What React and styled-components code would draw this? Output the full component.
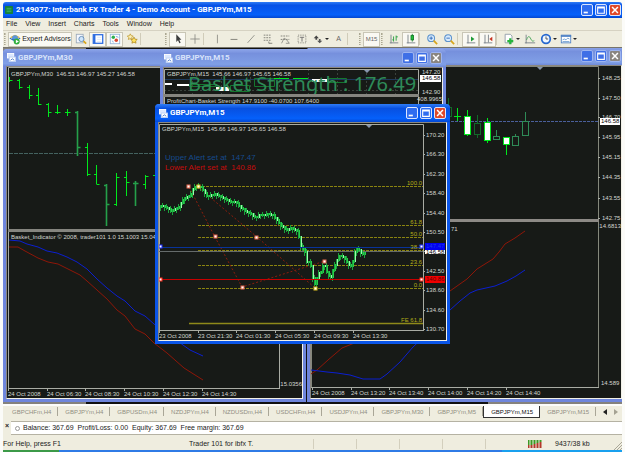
import React from "react";
import styled, { createGlobalStyle } from "styled-components";

const CHART_BG = "#171a17";
const AXIS = "#a9aca4";
const LIME = "#00e81c";
const SEA = "#2e8b57";

const TOOLS_MAIN = [
  ["Market Watch", "search"],
  ["Data Window", "data"],
  ["Navigator", "navigator"],
  ["Favorites", "stars"],
];

const TOOLS_LINES = [
  ["Vertical line", "vline"],
  ["Horizontal line", "hline"],
  ["Trendline", "trend"],
  ["Equidistant channel", "channel"],
  ["Fibonacci", "fibo"],
  ["Text label", "label"],
];

const TABS = [
  "GBPCHFm,H4",
  "GBPJPYm,H4",
  "GBPUSDm,H4",
  "NZDJPYm,H4",
  "NZDUSDm,H4",
  "USDCHFm,H4",
  "USDJPYm,H4",
  "GBPJPYm,M30",
  "GBPJPYm,M5",
  "GBPJPYm,M15",
  "GBPJPYm,M15",
];

// x, high, low, open, close
const M30_BARS = [
  [9, 77, 82, null, 80],
  [19, 79, 89, 80, 87],
  [29, 85, 99, 87, 95],
  [38, 88, 105, 95, 104],
  [48, 103, 117, 104, 112],
  [57, 105, 114, 112, 112],
  [67, 109, 116, 112, 112],
  [77, 111, 156, 112, 147, true],
  [87, 143, 176, 147, 174],
  [96, 165, 184, 174, 184],
  [106, 184, 226, 185, 204, true],
  [116, 173, 206, 204, 177],
  [126, 171, 196, 177, 182],
  [135, 181, 206, 183, 183, true],
  [145, 175, 189, 184, 176],
  [155, 174, 178, 175, 175],
];

// x, body top, body bottom, high, low, kind
const M15_CANDLES = [
  [448, 107, 116, 98, 116, "dark"],
  [457, 116, 117, 108, 121, "cross"],
  [467, 116, 134, 110, 136, "full"],
  [477, 123, 134, 115, 138, "dark"],
  [487, 122, 140, 118, 143, "full"],
  [496, 136, 139, 130, 139, "hollow"],
  [506, 137, 144, 137, 155, "full"],
  [515, 136, 145, 134, 145, "hollow"],
  [525, 121, 135, 112, 135, "hollow"],
];

const PRICE_PATH = [
  [159, 207], [163, 205], [167, 207], [171, 210], [173, 211], [177, 208],
  [180, 207], [182, 203], [185, 199], [187, 197], [191, 196], [193, 191],
  [195, 187], [198, 186], [202, 187], [204, 190], [206, 193], [209, 197],
  [212, 195], [216, 194], [220, 196], [224, 198], [228, 200], [233, 202],
  [237, 202], [240, 206], [244, 209], [248, 212], [252, 214], [257, 218],
  [260, 215], [265, 215], [270, 214], [274, 215], [278, 220], [281, 225],
  [284, 227], [288, 230], [292, 228], [295, 230], [299, 231], [301, 243],
  [303, 248], [307, 253], [308, 262], [311, 262], [313, 270], [315, 285],
  [317, 283], [319, 273], [322, 272], [325, 263], [327, 268], [329, 275],
  [332, 277], [333, 272], [335, 268], [339, 257], [341, 255], [345, 257],
  [347, 260], [350, 265], [353, 267], [355, 255], [357, 248], [360, 250],
  [363, 255], [368, 252],
];

const FIBO = [
  [186, "100.0"],
  [225, "61.8"],
  [237, "50.0"],
  [250, "38.2"],
  [265, "23.6"],
  [288, "0.0"],
];

function priceAt(x) {
  const i = Math.max(1, PRICE_PATH.findIndex((p) => p[0] >= x));
  const [x0, y0] = PRICE_PATH[i - 1];
  const [x1, y1] = PRICE_PATH[i];
  return y0 + ((y1 - y0) * (x - x0)) / (x1 - x0);
}

function Label({ x, y, children, ...rest }) {
  return (
    <text x={x} y={y + 2} {...rest}>
      {children}
    </text>
  );
}

function TimeAxis({ y, from, to, start, labels }) {
  return (
    <>
      <path d={`M${from} ${y + 0.5}H${to}`} stroke={AXIS} />
      {labels.map((label, i) => {
        const x = Math.round(start + i * 38.7);
        return (
          <React.Fragment key={label}>
            <path d={`M${x + 0.5} ${y}v3`} stroke={AXIS} />
            <Label x={x} y={y + 6}>
              {label}
            </Label>
          </React.Fragment>
        );
      })}
    </>
  );
}

function M30Chart() {
  return (
    <Plot viewBox="7 67 295 331" width="295" height="331">
      <path d="M8.5 388V67.5H279.5V388" fill="none" stroke={AXIS} />
      <path d="M9 153.5H279" stroke="#44625f" strokeDasharray="4 1" />
      {M30_BARS.map(([x, high, low, open, close, muted]) => (
        <path
          key={x}
          d={`M${x + 0.5} ${high}V${low}M${x + 0.5} ${close + 0.5}h3${
            open ? `M${x - 2} ${open + 0.5}h3` : ""
          }`}
          stroke={muted ? "#25a04a" : LIME}
          strokeWidth={muted ? 1.6 : 1}
        />
      ))}
      <Label x={11} y={74}>GBPJPYm,M30&nbsp; 146.53 146.97 145.27 146.58</Label>
      <rect x="8" y="229" width="272" height="3" fill="#85857f" />
      <Label x={11} y={237}>Basket_Indicator © 2008, trader101 1.0 15.1003 15.0499</Label>
      <polyline
        points="9,240 20,241 27,244 38,247 47,251 57,253 67,257 77,262 87,269 97,279 107,288 117,296 125,301 135,311 145,316 154,324 183,345 190,350 203,356"
        fill="none"
        stroke="#0b1fd0"
      />
      <polyline
        points="9,247 18,247 25,251 38,258 48,262 58,264 70,270 80,275 87,281 97,290 107,299 117,310 125,316 135,329 145,334 154,343 167,353 184,368 203,380"
        fill="none"
        stroke="#8e1608"
      />
      <Label x={302} y={384} textAnchor="end">15.0356</Label>
      <TimeAxis
        y={388}
        from={8}
        to={280}
        start={8}
        labels={["24 Oct 2008", "24 Oct 06:30", "24 Oct 08:30", "24 Oct 10:30", "24 Oct 12:30", "24 Oct 14:30"]}
      />
    </Plot>
  );
}

function Candle({ x, top, bottom, high, low, kind }) {
  const color = { dark: "#126a2a", cross: LIME, full: LIME, hollow: SEA }[kind];
  return (
    <g stroke={color} fill={kind === "full" ? "#fff" : CHART_BG}>
      <path d={`M${x + 0.5} ${high}V${low}`} />
      {kind === "cross" ? (
        <path d={`M${x - 3} ${top + 0.5}h7`} />
      ) : (
        <rect x={x - 2.5} y={top + 0.5} width="6" height={bottom - top} />
      )}
    </g>
  );
}

function M15Chart() {
  const prices = [
    [78, "148.25"], [98, "147.50"], [117, "146.70"], [137, "145.95"], [157, "145.15"],
    [177, "144.35"], [198, "143.55"], [218, "142.75"],
  ];
  return (
    <Plot viewBox="311 66 310 332" width="310" height="332">
      <path d="M311.5 387V66.5H598.5V387" fill="none" stroke="#85887c" />
      <path d="M311 121.5H598" stroke="#4a5f9a" strokeDasharray="3 1" />
      <path d="M537 67h6l-3 3z" fill="#8795ad" />
      {M15_CANDLES.map(([x, top, bottom, high, low, kind]) => (
        <Candle key={x} {...{ x, top, bottom, high, low, kind }} />
      ))}
      {prices.map(([y, text]) => (
        <g key={text}>
          <path d={`M598 ${y + 0.5}h2`} stroke={AXIS} />
          <Label x={602} y={y}>{text}</Label>
        </g>
      ))}
      <rect x="600" y="118" width="20" height="7" fill="#fff" />
      <Label x={601} y={121} fill="#000">146.58</Label>
      <rect x="311" y="219" width="288" height="3" fill="#8d8a86" />
      <Label x={451} y={229}>71</Label>
      <Label x={621} y={226} textAnchor="end">14.6813</Label>
      <Label x={601} y={383}>14.589</Label>
      <polyline
        points="311,374 317,370 328,360 342,348 352,344 390,328 425,306 450,291 467,279 477,269 493,259 499,252 505,244 515,238 525,231"
        fill="none"
        stroke="#8e1608"
      />
      <polyline
        points="311,370 327,372 337,373 350,375 363,379 380,379 387,374 400,362 413,347 430,331 450,310 460,301 470,293 477,290 495,286 507,281 516,276 525,270"
        fill="none"
        stroke="#0b1fd0"
      />
      <TimeAxis
        y={387}
        from={311}
        to={599}
        start={312}
        labels={["24 Oct 2008", "24 Oct 13:20", "24 Oct 13:40", "24 Oct 14:00", "24 Oct 14:20", "24 Oct 14:40"]}
      />
    </Plot>
  );
}

function BasketChart() {
  return (
    <Plot viewBox="164 68 278 90" width="278" height="90">
      <path d="M192.5 69v26M221.5 69v26M250.5 69v26M279.5 69v26M308.5 69v26M337.5 69v26M366.5 69v26M395.5 69v26M164 90.5h254" stroke="#3a423c" strokeDasharray="2 2" />
      <path d="M164 79.5h254" stroke="#1f3a5c" />
      <g fill="#fff">
        <path d="M164 83h8v2h-8zM177 84h12v2h-12zM216 87h13v4h-13zM312 79h15v3h-15z" />
      </g>
      <g fill="none" stroke="#15772f">
        <path d="M189.500 84.500h27v2h-27zM230.500 85.500h19v6h-19zM254.500 78.500h20v8h-20zM327.500 78.500h19v4h-19z" />
      </g>
      <path d="M274 78.500h15M293 78.500h15" stroke={LIME} />
      <BigText x="188" y="91">Basket Strength : 176.49</BigText>
      <path d="M164.500 158V69.500H418.500V158" fill="none" stroke={AXIS} />
      <path d="M364 70h6l-3 3z" fill="#8795ad" />
      <Label x={167} y={74}>GBPJPYm,M15&nbsp; 145.66 146.97 145.65 146.58</Label>
      <Label x={422} y={72}>147.20</Label>
      <rect x="420" y="75" width="21" height="7" fill="#fff" />
      <Label x={422} y={78} fill="#000">146.58</Label>
      <Label x={422} y={92}>142.90</Label>
      <rect x="164" y="94" width="255" height="3" fill="#85857f" />
      <Label x={442} y={99} textAnchor="end">408.9965</Label>
      <Label x={167} y={101}>ProfitChart-Basket Strength 147.9100 -40.0700 107.6400</Label>
    </Plot>
  );
}

function Handle({ x, y, color = "#e86a50" }) {
  return <rect x={x - 1} y={y - 1} width="3" height="3" fill="#fff" stroke={color} strokeWidth="1" />;
}

function FiboChart() {
  const prices = ["170.20", "166.30", "162.30", "158.40", "154.40", "150.50", "146.50", "142.50", "138.60", "134.60", "130.70"];
  const candles = [];
  for (let x = 160; x < 366; x += 2) {
    const y = Math.round(priceAt(x));
    const next = Math.round(priceAt(x + 2));
    const top = Math.min(y, next) - 1;
    const bottom = Math.max(y, next) + 1;
    const wick = (x * 7) % 4;
    candles.push(
      <React.Fragment key={x}>
        <path d={`M${x + 0.5} ${top - wick}V${bottom + 3 - wick}`} stroke="#1aa33c" />
        <path d={`M${x + 1.5} ${top}V${bottom}`} stroke={x % 3 ? "#27cf4a" : "#9dfaae"} />
      </React.Fragment>
    );
  }
  return (
    <Plot viewBox="159 123 287 217" width="287" height="217">
      <path d="M159.500 331V124.500H423.500V331" fill="none" stroke={AXIS} />
      <path d="M366 125h6l-3 3z" fill="#8795ad" />
      <Label x={162} y={129}>GBPJPYm,M15&nbsp; 145.66 146.97 145.65 146.58</Label>
      <AlertText x="165" y="160" fill="#164a8c">Upper Alert set at&nbsp; 147.47</AlertText>
      <AlertText x="165" y="170" fill="#c40c0c">Lower Alert set at&nbsp; 140.86</AlertText>
      <g stroke="#8a8410" strokeDasharray="3 1">
        {FIBO.map(([y]) => (
          <path key={y} d={`M198 ${y + 0.5}H423`} />
        ))}
      </g>
      <path d="M189 323.500H423" stroke="#8f8a1a" strokeWidth="1.500" />
      <path d="M189 187L215 237 242 287 325 261M198 187L257 237 315 288" fill="none" stroke="#8c1d0c" strokeDasharray="2 2" />
      <path d="M159 251.500H423" stroke="#656b6b" />
      {candles}
      <path d="M159 247.500H423" stroke="#08339a" />
      <path d="M159 279.500H423" stroke="#c80000" />
      {FIBO.map(([y, text]) => (
        <Label key={y} x={422} y={y - 3} textAnchor="end" fill="#b3ab18">{text}</Label>
      ))}
      <Label x={422} y={320} textAnchor="end" fill="#b3ab18">FE 61.8</Label>
      {prices.map((text, i) => {
        const y = Math.round(135 + i * 19.4);
        return (
          <g key={text}>
            <path d={`M423 ${y + 0.5}h2`} stroke={AXIS} />
            {text !== "146.50" && <Label x={426} y={y}>{text}</Label>}
          </g>
        );
      })}
      <rect x="425" y="249" width="20" height="5" fill="#fff" />
      <Label x={426} y={252} fill="#000">146.58</Label>
      <rect x="425" y="243" width="20" height="7" fill="#0000f0" />
      <Label x={426} y={246} fill="#1c3ce8">147.47</Label>
      <rect x="425" y="276" width="20" height="7" fill="#f00000" />
      <Label x={426} y={279} fill="#5c0000">140.86</Label>
      <Handle x={188} y={186} />
      <Handle x={198} y={186} color="#e0c020" />
      <Handle x={215} y={236} />
      <Handle x={256} y={237} />
      <Handle x={242} y={287} />
      <Handle x={315} y={288} color="#e0c020" />
      <Handle x={324} y={261} />
      <Handle x={160} y={246} color="#2030ff" />
      <Handle x={421} y={246} color="#2030ff" />
      <Handle x={160} y={279} color="#ff3020" />
      <Handle x={421} y={279} color="#ff3020" />
      <TimeAxis
        y={330}
        from={159}
        to={424}
        start={159}
        labels={["23 Oct 2008", "23 Oct 21:30", "24 Oct 01:30", "24 Oct 05:30", "24 Oct 09:30", "24 Oct 13:30"]}
      />
    </Plot>
  );
}

const ICONS = {
  expert: (
    <>
      <path d="M1 5l6-3 6 3-6 2z" fill="#d9b13a" />
      <circle cx="7" cy="6" r="3.500" fill="#5b96dc" />
      <path d="M1 6c3 3 9 3 12 0" fill="none" stroke="#2d6cb4" strokeWidth="1.500" />
      <circle cx="9" cy="10" r="3.500" fill="#2fae3c" />
      <path d="M8 8l3.500 2L8 12z" fill="#fff" />
    </>
  ),
  search: (
    <>
      <rect x="1.500" y="1.500" width="8" height="10" fill="#f4f8ff" stroke="#9aa9b8" />
      <circle cx="7.500" cy="7" r="3" fill="#cfe6fa" stroke="#5d88b4" />
      <path d="M10 9.500l3 3" stroke="#d8a51a" strokeWidth="2" />
    </>
  ),
  data: (
    <>
      <rect x="1.500" y="2" width="11" height="10" fill="#fff" stroke="#2c6be0" strokeWidth="1.500" />
      <path d="M3 2v10" stroke="#2c6be0" strokeWidth="2" />
      <path d="M6 5h5M6 7.500h5M6 10h5" stroke="#dce6f8" />
    </>
  ),
  navigator: (
    <>
      <rect x="1.500" y="1.500" width="11" height="11" fill="#fdfdfd" stroke="#93b4d8" />
      <circle cx="5" cy="5" r="2" fill="#2fae4c" />
      <circle cx="8.500" cy="8.500" r="2" fill="#d9442c" />
      <path d="M8 4l3 1M4 9l1 2" stroke="#6aa0e0" />
    </>
  ),
  stars: (
    <>
      <path d="M5 1l1.100 2.200 2.400.300-1.700 1.700.4 2.400L5 6.500 2.800 7.600l.4-2.400L1.500 3.500l2.400-.300z" fill="#fdf0b0" stroke="#b88f22" strokeWidth="0.800" />
      <path d="M9.300 4.800l1.200 2.400 2.600.3-1.900 1.800.5 2.600-2.400-1.200-2.400 1.200.5-2.600-1.900-1.800 2.600-.3z" fill="#ffe25c" stroke="#a87f14" strokeWidth="0.800" />
    </>
  ),
  cursor: <path d="M5 1.500v9l2-2 1.600 3.500 1.500-.7L8.500 8H11z" fill="#3c3c3c" />,
  cross: <path d="M7 1.500v11M1.500 7h11" stroke="#8b8b84" />,
  vline: <path d="M7.500 2v10" stroke="#8b8b84" />,
  hline: <path d="M3 7.500h8" stroke="#77776f" />,
  trend: <path d="M3 11.500l8-9" stroke="#8b8b84" />,
  channel: (
    <>
      <path d="M2 2.500h9M2 5.500h9M2 8.500h9" stroke="#77776f" strokeDasharray="2 1" />
      <path d="M8 12h4M8 10v2" stroke="#77776f" />
    </>
  ),
  fibo: (
    <>
      <path d="M2 3.500h10M2 7.500h10" stroke="#77776f" strokeDasharray="2 1" />
      <path d="M3 12l3-6 3 2 3 4M8 12h4" fill="none" stroke="#8b8b84" />
    </>
  ),
  label: (
    <>
      <rect x="2.500" y="2.500" width="9" height="9" fill="none" stroke="#77776f" strokeDasharray="1 1" />
      <path d="M4.500 5h5M7 5v5" stroke="#666" />
    </>
  ),
  arrows: (
    <>
      <path d="M2 6l3-3 3 3H6v2H4V6z" fill="#444" />
      <path d="M6 9l3 3 3-3h-2V7H8v2z" fill="#555" />
    </>
  ),
  bars: (
    <>
      <path d="M3.500 2v10M2 11.500h10" stroke="#747c84" />
      <path d="M6.500 4v6M5 8h1.500M9.500 3v6M9.500 4.500h2" stroke="#1d9a35" />
    </>
  ),
  candle: (
    <>
      <path d="M3.500 2v10M2 11.500h10" stroke="#747c84" />
      <path d="M8.500 1v9" stroke="#137c28" />
      <rect x="7" y="3" width="3" height="5" fill="#22c03c" stroke="#137c28" />
    </>
  ),
  zoomIn: (
    <>
      <circle cx="6" cy="6" r="4" fill="#d8eafc" stroke="#5d93cc" strokeWidth="1.200" />
      <path d="M4 6h4M6 4v4" stroke="#2563b8" />
      <path d="M9 9l4 4" stroke="#d8a51a" strokeWidth="2" />
    </>
  ),
  zoomOut: (
    <>
      <circle cx="6" cy="6" r="4" fill="#d8eafc" stroke="#5d93cc" strokeWidth="1.200" />
      <path d="M4 6h4" stroke="#2563b8" />
      <path d="M9 9l4 4" stroke="#d8a51a" strokeWidth="2" />
    </>
  ),
  scroll: (
    <>
      <path d="M3.500 2v10M2 11.500h10" stroke="#747c84" />
      <path d="M7 4l4 3-4 3z" fill="#1d9a35" />
    </>
  ),
  shift: (
    <>
      <path d="M3.500 2v10M2 11.500h10M7.500 2v9" stroke="#747c84" />
      <path d="M12 4.500v5L8.500 7z" fill="#c8321e" />
    </>
  ),
  newChart: (
    <>
      <path d="M2.500 1.500h6l2 2v8h-8z" fill="#fff" stroke="#8c98a4" />
      <path d="M8.500 6v7M5 9.500h7" stroke="#27b53c" strokeWidth="2.600" />
    </>
  ),
  indicator: (
    <>
      <path d="M2.500 2v10M1 11.500h12" stroke="#747c84" />
      <path d="M3 8c2-5 3-5 5-1s3 2 4 2" fill="none" stroke="#3fa052" />
    </>
  ),
  clock: (
    <>
      <circle cx="7" cy="7" r="5" fill="#eef6ff" stroke="#2466cf" strokeWidth="2" />
      <path d="M7 4v3h2.500" fill="none" stroke="#444" />
    </>
  ),
  template: (
    <>
      <rect x="1.500" y="2.500" width="11" height="9" fill="#fff" stroke="#4d80c4" />
      <path d="M1 3.500h12" stroke="#4d80c4" strokeWidth="2" />
      <path d="M3 8l2-1 2 1 2-2 2 1M3 10h8" fill="none" stroke="#6b9ccf" />
    </>
  ),
};

function Icon({ name }) {
  return (
    <ToolIcon viewBox="0 0 14 14" width="12" height="12" aria-hidden="true">
      {ICONS[name]}
    </ToolIcon>
  );
}

function Tool({ label, icon, pressed, menu }) {
  return (
    <ToolButton aria-label={label} aria-pressed={pressed} $pressed={pressed} $menu={menu}>
      <Icon name={icon} />
      {menu && <Caret />}
    </ToolButton>
  );
}

function WindowButtons({ active }) {
  return (
    <>
      <CaptionButton aria-label="Minimize" $active={active}>
        <svg viewBox="0 0 12 12" width="10" height="10"><path d="M2 9h5" stroke="#fff" strokeWidth="2" /></svg>
      </CaptionButton>
      <CaptionButton aria-label="Maximize" $active={active}>
        <svg viewBox="0 0 12 12" width="10" height="10"><path d="M2 2.500h8v7.500h-8zM2 3.500h8" fill="none" stroke="#fff" strokeWidth="1.300" /></svg>
      </CaptionButton>
      <CaptionButton aria-label="Close" $active={active} $close>
        <svg viewBox="0 0 12 12" width="10" height="10"><path d="M2.500 2.500l7 7M9.500 2.500l-7 7" stroke="#fff" strokeWidth="1.800" /></svg>
      </CaptionButton>
    </>
  );
}

function ChartWindow({ title, x, y, width, height, active, buttons = true, slim, children }) {
  return (
    <Frame $x={x} $y={y} $width={width} $height={height} $active={active}>
      <Caption $active={active} $slim={slim}>
        <svg viewBox="0 0 10 10" width="9" height="9" aria-hidden="true">
          <rect x="0.500" y="0.500" width="7" height="5" fill="#dce8ff" stroke="#fff" />
          <rect x="2.500" y="4.500" width="7" height="5" fill="#fff" stroke="#bcd0f4" />
          <path d="M4 8l2-1.500L8 8" fill="none" stroke="#4a78c8" />
        </svg>
        <CaptionText>{title}</CaptionText>
        {buttons && <WindowButtons active={active} />}
      </Caption>
      <WindowBody>{children}</WindowBody>
    </Frame>
  );
}

export default function App() {
  return (
    <>
      <GlobalStyle />
      <Terminal>
        <AppTitle>
          <svg viewBox="0 0 10 10" width="8" height="8" aria-hidden="true">
            <rect width="10" height="10" rx="1" fill="#17823b" />
            <path d="M2 3h6M2 5h6M2 7h6" stroke="#3fb765" />
          </svg>
          <AppTitleText>2149077: Interbank FX Trader 4 - Demo Account - GBPJPYm,M15</AppTitleText>
          <WindowButtons active />
        </AppTitle>

        <MenuBar>
          {["File", "View", "Insert", "Charts", "Tools", "Window", "Help"].map((item) => (
            <MenuItem key={item}>{item}</MenuItem>
          ))}
        </MenuBar>

        <ToolBar>
          <Grip />
          <ExpertButton aria-pressed="true">
            <Icon name="expert" />
            Expert Advisors
          </ExpertButton>
          {TOOLS_MAIN.map(([label, icon]) => (
            <Tool key={icon} label={label} icon={icon} pressed={icon === "data" || icon === "navigator"} />
          ))}
          <Separator $room={24} />
          <Grip />
          <Tool label="Cursor" icon="cursor" pressed />
          <Tool label="Crosshair" icon="cross" />
          <Separator $room={5} />
          {TOOLS_LINES.map(([label, icon]) => (
            <Tool key={icon} label={label} icon={icon} />
          ))}
          <Tool label="Arrows" icon="arrows" menu />
          <ToolButton>A</ToolButton>
          <Separator $room={11} />
          <Grip />
          <PeriodButton aria-pressed="true">M15</PeriodButton>
          <Grip />
          <Tool label="Bar chart" icon="bars" />
          <Tool label="Candlesticks" icon="candle" pressed />
          <Separator $room={4} />
          <Tool label="Zoom in" icon="zoomIn" />
          <Tool label="Zoom out" icon="zoomOut" />
          <Separator $room={5} />
          <Tool label="Auto scroll" icon="scroll" pressed />
          <Tool label="Chart shift" icon="shift" pressed />
          <Separator $room={5} />
          <Tool label="New chart" icon="newChart" menu />
          <Tool label="Indicators" icon="indicator" />
          <Tool label="Periods" icon="clock" menu />
          <Tool label="Templates" icon="template" menu />
        </ToolBar>

        <Desktop>
          <ChartWindow title="GBPJPYm,M30" x={0} y={1} width={303} height={353} buttons={false} slim>
            <M30Chart />
          </ChartWindow>
          <ChartWindow title="GBPJPYm,M15" x={304} y={-1} width={318} height={355}>
            <M15Chart />
          </ChartWindow>
          <ChartWindow title="GBPJPYm,M15" x={157} y={1} width={286} height={120}>
            <BasketChart />
          </ChartWindow>
          <ChartWindow title="GBPJPYm,M15" x={152} y={56} width={295} height={240} active>
            <FiboChart />
          </ChartWindow>
        </Desktop>

        <TabBar>
          {TABS.map((tab, i) => (
            <Tab key={i} $active={i === 9}>{tab}</Tab>
          ))}
          <TabArrows>
            <button aria-label="Scroll tabs left">
              <svg viewBox="0 0 4 6" width="4" height="6"><path d="M4 0v6L0 3z" fill="#222" /></svg>
            </button>
            <button aria-label="Scroll tabs right" disabled>
              <svg viewBox="0 0 4 6" width="4" height="6"><path d="M0 0v6l4-3z" fill="#a5a293" /></svg>
            </button>
          </TabArrows>
        </TabBar>

        <AccountRow>
          <CloseStrip aria-label="Close terminal">×</CloseStrip>
          <Account>
            <Dot />
            Balance: 367.69&nbsp; Profit/Loss: 0.00&nbsp; Equity: 367.69&nbsp; Free margin: 367.69
          </Account>
        </AccountRow>

        <StatusBar>
          <StatusHelp>For Help, press F1</StatusHelp>
          <StatusProfile>Trader 101 for ibfx T.</StatusProfile>
          <StatusCell />
          <StatusCell />
          <StatusCell />
          <StatusCell />
          <StatusCell />
          <Traffic>
            <svg viewBox="0 0 14 8" width="14" height="8" aria-hidden="true">
              <path d="M0.500 0v5M3.500 0v5M6.500 0v4M9.500 0v3M12.500 0v2" stroke="#3b9a24" strokeWidth="2" />
              <path d="M0.500 5v3M3.500 5v3M6.500 4v4M9.500 3v5M12.500 2v6" stroke="#b3382a" strokeWidth="2" />
            </svg>
            9437/38 kb
          </Traffic>
          <SizeGrip viewBox="0 0 8 8" width="8" height="8" aria-hidden="true">
            <path d="M0 8l8-8M3 8l5-5M6 8l2-2" stroke="#a9a697" />
          </SizeGrip>
        </StatusBar>
        <TaskBar />
      </Terminal>
    </>
  );
}

const GlobalStyle = createGlobalStyle`
  * {
    box-sizing: border-box;
  }
  body {
    margin: 0;
    background: #fbfbf8;
    color: #222;
    font: 7px/10px "Liberation Sans", Arial, sans-serif;
  }
  button {
    margin: 0;
    padding: 0;
    border: 0;
    background: none;
    color: inherit;
    font: inherit;
    white-space: nowrap;
  }
`;

const Terminal = styled.div`
  display: flex;
  flex-direction: column;
  min-height: 100vh;
  padding: 2px 3px 0;
  overflow: hidden;
`;

const AppTitle = styled.header`
  display: flex;
  align-items: center;
  gap: 2px;
  height: 16px;
  padding: 0 1px 0 2px;
  border-radius: 3px 3px 0 0;
  background: linear-gradient(#2f7cf5, #0752e6 20%, #0560fa 80%, #0346cf);
`;

const AppTitleText = styled.h1`
  flex: 1;
  margin: 0 0 0 1px;
  color: #fff;
  font: bold 8px/10px Roboto, "Liberation Sans", sans-serif;
`;

const MenuBar = styled.nav`
  display: flex;
  gap: 8px;
  height: 13px;
  padding: 0 3px;
  border-bottom: 1px solid #d6d2c2;
  background: #efeddf;
`;

const MenuItem = styled.button`
  line-height: 12px;
`;

const ToolBar = styled.div`
  display: flex;
  align-items: center;
  height: 16px;
  background: #efeddf;
`;

const Grip = styled.span`
  flex: none;
  width: 2px;
  height: 12px;
  margin: 0 2px 0 1px;
  border-left: 1px dotted #aaa792;
  border-right: 1px dotted #c9c5b2;
`;

const Separator = styled.span`
  flex: none;
  width: ${({ $room }) => $room}px;
  height: 12px;
  border-left: 1px solid #d0ccb9;
`;

const ToolIcon = styled.svg`
  flex: none;
`;

const ToolButton = styled.button`
  display: flex;
  flex: none;
  align-items: center;
  justify-content: center;
  width: ${({ $menu }) => ($menu ? 20 : 17)}px;
  height: 15px;
  border: 1px solid ${({ $pressed }) => ($pressed ? "#c9c6b6" : "transparent")};
  background: ${({ $pressed }) => ($pressed ? "#faf9f3" : "transparent")};
  color: #666;
`;

const ExpertButton = styled(ToolButton).attrs({ $pressed: true })`
  gap: 1px;
  width: 64px;
  color: #222;
`;

const PeriodButton = styled(ToolButton).attrs({ $pressed: true })`
  font-size: 6px;
`;

const Caret = styled.span`
  margin-left: 1px;
  border: 2px solid transparent;
  border-top-color: #222;
  border-bottom: 0;
`;

const Desktop = styled.main`
  position: relative;
  flex: 1;
  min-height: 357px;
  overflow: hidden;
  border-top: 1px solid #77756c;
  background: linear-gradient(90deg, #85827d 83px, #111 83px, #111 485px, #85827d 485px);
`;

const Frame = styled.section`
  position: absolute;
  left: ${({ $x }) => $x}px;
  top: ${({ $y }) => $y}px;
  display: flex;
  flex-direction: column;
  width: ${({ $width }) => $width}px;
  height: ${({ $height }) => $height}px;
  padding: 0 3px 3px;
  border-radius: 4px 4px 0 0;
  background: ${({ $active }) => ($active ? "#0a55e8" : "#6f86dc")};
`;

const Caption = styled.header`
  display: flex;
  flex: none;
  align-items: center;
  gap: 2px;
  height: ${({ $slim }) => ($slim ? 17 : 18)}px;
  margin: 0 -3px;
  padding: 0 4px;
  border-radius: 4px 4px 0 0;
  background: ${({ $active }) =>
    $active
      ? "linear-gradient(#2f7cf5, #0850e0 25%, #0560fa 80%, #0348d4)"
      : "linear-gradient(#8ea6ea, #7690dd 25%, #809fe6 85%, #6f8ad8)"};
  color: ${({ $active }) => ($active ? "#fff" : "#d9e3fa")};
`;

const CaptionText = styled.h2`
  flex: 1;
  margin: 0;
  font: bold 8px/10px Roboto, "Liberation Sans", sans-serif;
`;

const CaptionButton = styled.button`
  display: flex;
  flex: none;
  align-items: center;
  justify-content: center;
  width: 12px;
  height: 12px;
  border: 1px solid ${({ $active }) => ($active ? "#dbe6ff" : "#9db4f0")};
  border-radius: 2px;
  background: ${({ $active, $close }) =>
    $close ? ($active ? "#e0492a" : "#8a8580") : $active ? "#2f6df0" : "#3f6fe6"};
`;

const WindowBody = styled.div`
  flex: 1;
  overflow: hidden;
  border: 1px solid;
  border-color: #8b8880 #f2f1e8 #f2f1e8 #8b8880;
  background: ${CHART_BG};
`;

const Plot = styled.svg`
  display: block;
  font-size: 6px;
  fill: #d3d5d0;
`;

const BigText = styled.text`
  fill: ${SEA};
  font: 20px "Noto Sans", "Open Sans", sans-serif;
`;

const AlertText = styled.text`
  font-size: 8px;
`;

const TabBar = styled.div`
  display: flex;
  height: 15px;
  padding: 0 0 1px 2px;
  border-top: 2px solid #fdfdfb;
  background: #efeddf;
  font-size: 6px;
`;

const Tab = styled.button`
  padding: 0 6px 0 7px;
  border-right: 1px solid #a9a697;
  ${({ $active }) =>
    $active
      ? "border: 1px solid #333; border-top: 0; background: #fff; color: #111;"
      : "color: #8f8d82; margin: 1px 0 2px;"}
`;

const TabArrows = styled.div`
  display: flex;
  align-items: center;
  gap: 7px;
  margin-left: auto;
  padding-right: 4px;
  button {
    display: flex;
  }
`;

const AccountRow = styled.section`
  display: flex;
  height: 18px;
  padding: 2px 0;
  background: #efeddf;
`;

const CloseStrip = styled.button`
  align-self: flex-start;
  width: 8px;
  font-weight: bold;
`;

const Account = styled.div`
  display: flex;
  flex: 1;
  align-items: center;
  padding-left: 4px;
  border: 1px solid #b5b2a3;
  border-width: 1px 0;
  background: #fff;
`;

const Dot = styled.span`
  width: 5px;
  height: 5px;
  margin-right: 3px;
  border: 1px solid #999;
  border-radius: 50%;
`;

const StatusBar = styled.footer`
  display: flex;
  align-items: center;
  height: 13px;
  background: #efeddf;
`;

const StatusHelp = styled.span`
  width: 186px;
`;

const StatusProfile = styled.span`
  width: 124px;
`;

const StatusCell = styled.span`
  width: 43px;
  height: 10px;
  border-left: 1px solid #d3cfbd;
`;

const Traffic = styled.span`
  display: flex;
  align-items: center;
  gap: 13px;
`;

const SizeGrip = styled.svg`
  align-self: flex-end;
  margin-left: auto;
`;

const TaskBar = styled.div`
  height: 2px;
  background: linear-gradient(90deg, #3c9a48 56px, #2f7be6 56px, #2f7be6 499px, #19a0ee 499px);
`;
